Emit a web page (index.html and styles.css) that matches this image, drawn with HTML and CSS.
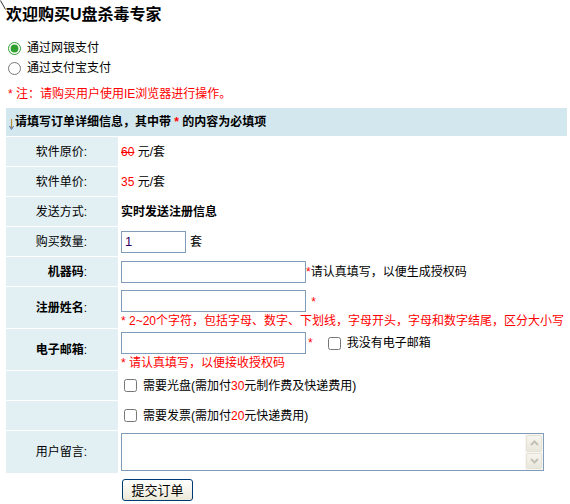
FILE: index.html
```html
<!DOCTYPE html>
<html lang="zh-CN">
<head>
  <meta charset="UTF-8" />
  <title>欢迎购买U盘杀毒专家</title>
  <link rel="stylesheet" href="styles.css">
</head>
<body>
  <h1 class="title"><svg class="broken" width="6" height="10" viewBox="0 0 6 10"><path d="M0.5 0.5 L5.5 9.5" stroke="#333" stroke-width="1" fill="none"/></svg>欢迎购买U盘杀毒专家</h1>

  <div class="pay">
    <label><input type="radio" name="pay" checked> 通过网银支付</label>
    <label><input type="radio" name="pay"> 通过支付宝支付</label>
  </div>

  <p class="note">* 注：请购买用户使用IE浏览器进行操作。</p>

  <div class="order">
    <div class="head">
      <svg class="arrow" width="5" height="11" viewBox="0 0 5 11"><path d="M2.5 0 V9" stroke="#b98a3c" stroke-width="1.2"/><path d="M0.5 7 L2.5 10.5 L4.5 7" stroke="#4a6a9a" stroke-width="1" fill="none"/></svg>
      <span>请填写订单详细信息，其中带 <span class="red">*</span> 的内容为必填项</span>
    </div>

    <div class="label">软件原价:</div>
    <div class="value"><span class="red strike">60</span>&nbsp;元/套</div>

    <div class="label">软件单价:</div>
    <div class="value"><span class="red">35</span>&nbsp;元/套</div>

    <div class="label">发送方式:</div>
    <div class="value"><b>实时发送注册信息</b></div>

    <div class="label">购买数量:</div>
    <div class="value"><input class="qty" type="text" value="1"> 套</div>

    <div class="label"><b>机器码</b>:</div>
    <div class="value"><input class="text" type="text"><span class="red">*</span>请认真填写，以便生成授权码</div>

    <div class="label"><b>注册姓名</b>:</div>
    <div class="value stack">
      <div><input class="text" type="text"> <span class="red star">*</span></div>
      <div class="red">* 2~20个字符，包括字母、数字、下划线，字母开头，字母和数字结尾，区分大小写</div>
    </div>

    <div class="label"><b>电子邮箱</b>:</div>
    <div class="value stack">
      <div class="line"><input class="text" type="text"> <span class="red star">*</span><label class="noemail"><input type="checkbox"> 我没有电子邮箱</label></div>
      <div class="red">* 请认真填写，以便接收授权码</div>
    </div>

    <div class="label"></div>
    <div class="value"><label><input type="checkbox"> 需要光盘(需加付<span class="red">30</span>元制作费及快递费用)</label></div>

    <div class="label"></div>
    <div class="value"><label><input type="checkbox"> 需要发票(需加付<span class="red">20</span>元快递费用)</label></div>

    <div class="label tall">用户留言:</div>
    <div class="value top">
      <div class="msgbox">
        <textarea class="msg"></textarea>
        <div class="scroll">
          <span class="sbtn"><svg width="9" height="6" viewBox="0 0 9 6"><path d="M1 5 L4.5 1.5 L8 5" stroke="#c4c2b4" stroke-width="2" fill="none"/></svg></span>
          <span class="sbtn"><svg width="9" height="6" viewBox="0 0 9 6"><path d="M1 1 L4.5 4.5 L8 1" stroke="#c4c2b4" stroke-width="2" fill="none"/></svg></span>
        </div>
      </div>
    </div>

    <div></div>
    <div class="submit"><button type="button">提交订单</button></div>
  </div>
</body>
</html>
```

FILE: styles.css
```css
body {
  margin: 0;
  font-family: "Liberation Sans", "Noto Sans CJK SC", sans-serif;
  font-size: 12px;
  line-height: 14px;
  color: #000;
  background-color: #fff;
}

.title {
  margin: 0;
  padding-top: 6px;
  font-size: 16px;
  line-height: 18px;
  font-weight: bold;
  display: flex;
  align-items: flex-start;
}

.broken {
  margin-top: -6px;
}

.pay {
  margin-top: 17px;
  padding-left: 3px;
  display: flex;
  flex-direction: column;
  gap: 6px;
}

.pay label {
  display: flex;
  align-items: center;
}

.pay input {
  margin: 0 6px 0 5px;
  width: 13px;
  height: 13px;
  accent-color: #2f9f2f;
}

.note {
  margin: 12px 0 0 8px;
  color: #f00;
}

.red {
  color: #f00;
}

.strike {
  text-decoration: line-through;
}

.order {
  margin: 7px 3px 0 6px;
  display: grid;
  grid-template-columns: 112px 1fr;
  row-gap: 1px;
}

.head {
  grid-column: 1 / 3;
  height: 28px;
  background-color: #d3e7ee;
  font-weight: bold;
  display: flex;
  align-items: center;
  padding-left: 3px;
}

.arrow {
  margin: 5px 1px 0 0;
}

.label {
  min-height: 29px;
  background-color: #e2f0f4;
  display: flex;
  align-items: center;
  justify-content: flex-end;
  padding-right: 31px;
}

.tall {
  min-height: 42px;
}

.value {
  padding-left: 3px;
  display: flex;
  align-items: center;
}

.top {
  align-items: flex-start;
  padding-top: 2px;
}

.stack {
  flex-direction: column;
  align-items: flex-start;
  justify-content: flex-start;
  padding-top: 3px;
  gap: 2px;
}

.stack .line {
  display: flex;
  align-items: center;
}

input[type="text"] {
  box-sizing: border-box;
  height: 22px;
  border: 1px solid #7f9db9;
  margin: 0;
  padding: 2px 3px;
  font-family: "Liberation Sans", sans-serif;
  font-size: 13px;
}

.qty {
  width: 65px;
  margin-right: 4px !important;
  color: #330066;
}

.text {
  width: 185px;
}

.star {
  margin-left: 2px;
}

.noemail {
  display: flex;
  align-items: center;
  margin-left: 12px;
}

.value label {
  display: flex;
  align-items: center;
}

input[type="checkbox"] {
  width: 13px;
  height: 13px;
  margin: 0 6px 0 3px;
}

.msgbox {
  box-sizing: border-box;
  width: 423px;
  height: 38px;
  border: 1px solid #7f9db9;
  display: flex;
}

.msg {
  flex: 1;
  margin: 0;
  border: none;
  resize: none;
  outline: none;
}

.scroll {
  width: 16px;
  padding: 1px;
  display: flex;
  flex-direction: column;
  gap: 1px;
  background-color: #f7f6f1;
}

.sbtn {
  flex: 1;
  border: 1px solid #e4e2d6;
  border-radius: 2px;
  background: linear-gradient(#f6f5ee, #e9e7dc);
  display: flex;
  align-items: center;
  justify-content: center;
}

.submit {
  padding: 5px 0 0 4px;
}

.submit button {
  width: 71px;
  height: 22px;
  border: 1px solid #003c74;
  border-radius: 3px;
  background: linear-gradient(#ffffff, #ece9d8);
  font-family: "Noto Sans CJK SC", sans-serif;
  font-size: 13px;
  line-height: 16px;
  padding: 0;
}
```
